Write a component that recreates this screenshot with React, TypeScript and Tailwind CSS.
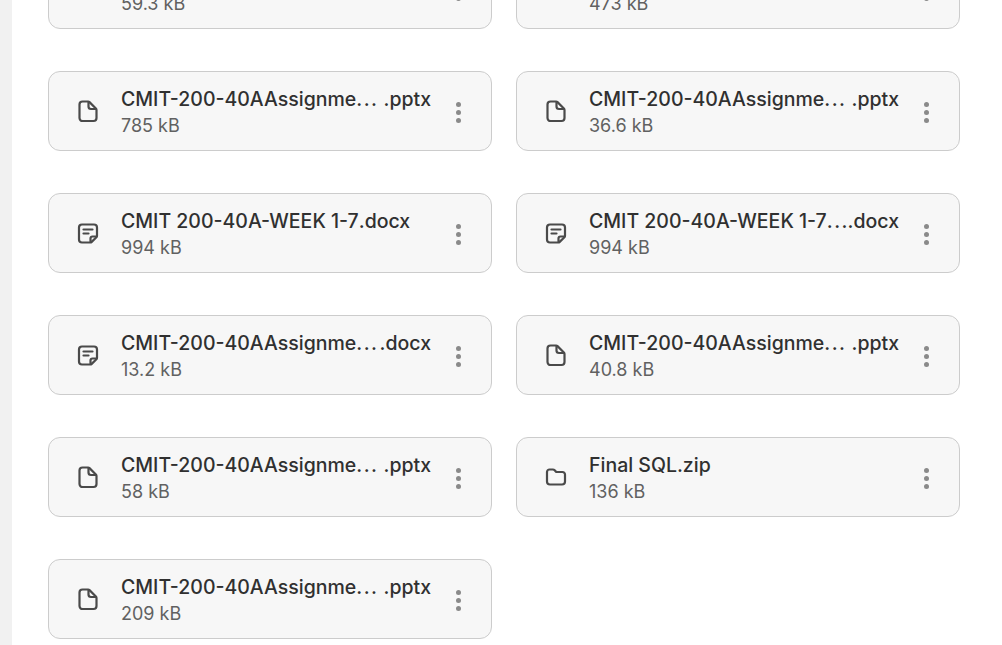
import React from "react";

type Kind = "file" | "note" | "folder";

type Attachment = {
  name: string;
  cut?: boolean;
  ext: string;
  size: string;
  kind: Kind;
};

const assignment = "CMIT-200-40AAssignme";
const week = "CMIT 200-40A-WEEK 1-7";

const attachments: Attachment[] = [
  { name: assignment, cut: true, ext: ".pptx", size: "59.3 kB", kind: "file" },
  { name: assignment, cut: true, ext: ".pptx", size: "473 kB", kind: "file" },
  { name: assignment, cut: true, ext: ".pptx", size: "785 kB", kind: "file" },
  { name: assignment, cut: true, ext: ".pptx", size: "36.6 kB", kind: "file" },
  { name: week, ext: ".docx", size: "994 kB", kind: "note" },
  { name: week, cut: true, ext: ".docx", size: "994 kB", kind: "note" },
  { name: assignment, cut: true, ext: ".docx", size: "13.2 kB", kind: "note" },
  { name: assignment, cut: true, ext: ".pptx", size: "40.8 kB", kind: "file" },
  { name: assignment, cut: true, ext: ".pptx", size: "58 kB", kind: "file" },
  { name: "Final SQL", ext: ".zip", size: "136 kB", kind: "folder" },
  { name: assignment, cut: true, ext: ".pptx", size: "209 kB", kind: "file" },
];

function KindIcon({ kind }: { kind: Kind }) {
  return (
    <svg
      viewBox="0 0 24 24"
      fill="none"
      stroke="#4a4a4a"
      strokeWidth="2.2"
      strokeLinejoin="round"
      strokeLinecap="round"
      className="w-6 h-6 shrink-0"
    >
      {kind === "file" && (
        <>
          <path d="M6.5 2.500h5.600c.5 0 1 .2 1.400.6l6.400 6.400c.4.4.6.9.6 1.400v8.100a3 3 0 0 1-3 3H6.500a3 3 0 0 1-3-3v-13.500a3 3 0 0 1 3-3z" />
          <path d="M12.500 3v4.500a2.500 2.500 0 0 0 2.500 2.500h5" />
        </>
      )}
      {kind === "note" && (
        <>
          <path d="M6 3.500h12a3 3 0 0 1 3 3v8.300c0 .5-.2 1-.6 1.400l-4.700 4.700c-.4.400-.9.600-1.400.600H6a3 3 0 0 1-3-3v-12a3 3 0 0 1 3-3z" />
          <path d="M7.500 8.500h9M7.500 12.500h5" />
          <path d="M14.500 20.500v-3a2 2 0 0 1 2-2h4" />
        </>
      )}
      {kind === "folder" && (
        <path d="M3 7a2.500 2.500 0 0 1 2.500-2.500h3.400c.7 0 1.300.3 1.800.8l.8.9c.4.500 1 .8 1.700.8h5.300A2.500 2.500 0 0 1 21 9.500v7a3 3 0 0 1-3 3H6a3 3 0 0 1-3-3z" />
      )}
    </svg>
  );
}

function Kebab() {
  return (
    <div className="flex flex-col items-center gap-[3px] w-[5px] shrink-0">
      <span className="w-[5px] h-[5px] rounded-full bg-[#8a8a8a]" />
      <span className="w-[5px] h-[5px] rounded-full bg-[#8a8a8a]" />
      <span className="w-[5px] h-[5px] rounded-full bg-[#8a8a8a]" />
    </div>
  );
}

function AttachmentCard({ name, cut, ext, size, kind }: Attachment) {
  return (
    <div className="h-20 flex items-center rounded-xl border border-[#cccccc] bg-[#f7f7f7] pl-[27px] pr-[30.5px]">
      <KindIcon kind={kind} />
      <div className="ml-[21px] w-[310px] min-w-0 mt-0.5">
        <div className="flex text-[19.5px] leading-[26px] font-medium text-[#303030] whitespace-nowrap">
          <span>{name}</span>
          {cut && <span className="tracking-[1.5px] -mr-[3px]">...</span>}
          <span className={cut ? "ml-auto" : ""}>{ext}</span>
        </div>
        <div className="text-[18px] leading-[26px] mt-px text-[#616161]">{size}</div>
      </div>
      <div className="ml-auto mt-0.5">
        <Kebab />
      </div>
    </div>
  );
}

export default function App() {
  return (
    <div
      className="h-[645px] overflow-hidden flex bg-white"
      style={{ fontFamily: "Inter, sans-serif" }}
    >
      <div className="w-3 shrink-0 bg-[#f1f1f1]" />
      <div className="flex-1 pl-9 pr-[42px] -mt-[51px]">
        <div className="grid grid-cols-2 gap-x-6 gap-y-[42px]">
          {attachments.map((a, i) => (
            <AttachmentCard key={i} {...a} />
          ))}
        </div>
      </div>
    </div>
  );
}
